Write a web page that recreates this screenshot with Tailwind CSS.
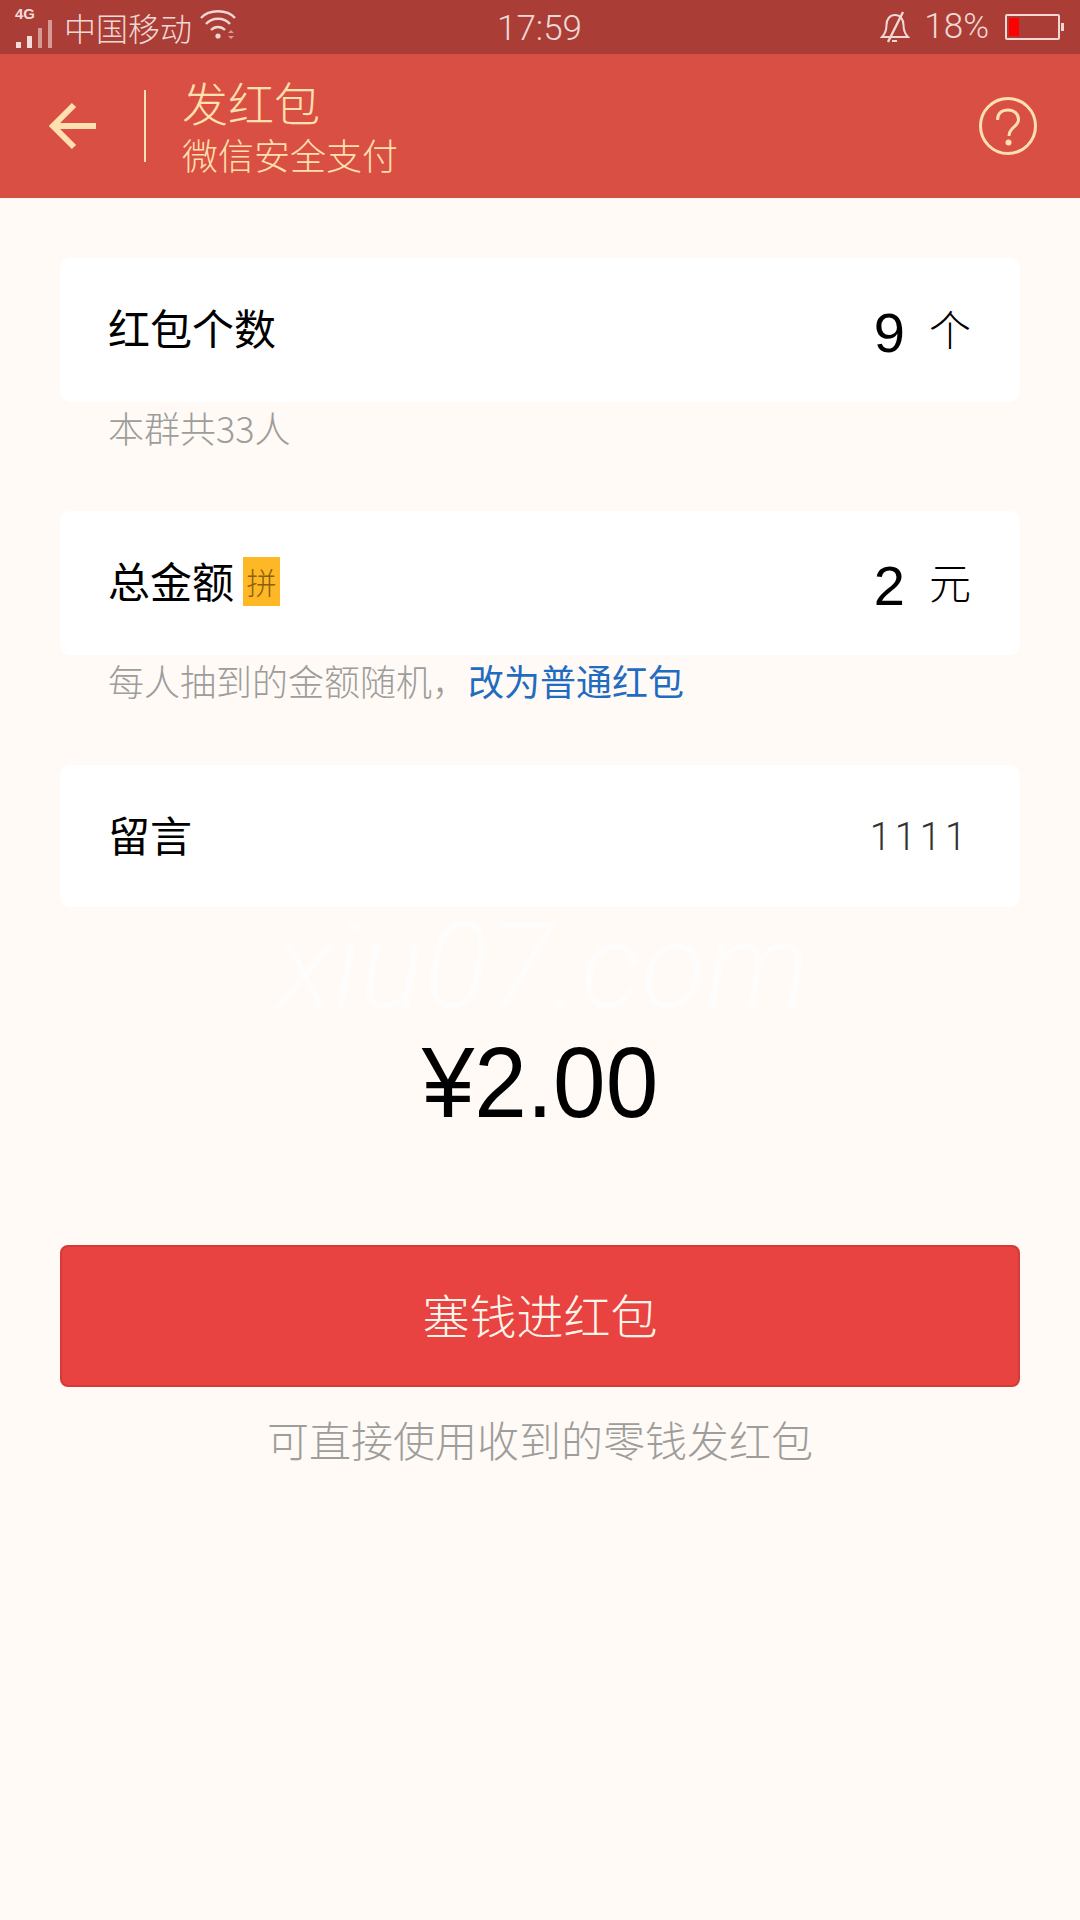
<!DOCTYPE html>
<html lang="zh-CN">
<head>
    <meta charset="UTF-8">
    <title>发红包</title>
    <script src="https://cdn.jsdelivr.net/npm/@tailwindcss/browser@4"></script>
</head>
<body class="bg-[#fffaf6] font-['Liberation_Sans','Noto_Sans_CJK_SC',sans-serif]">
<div class="relative w-[1080px] h-[1920px] overflow-hidden">
    <!-- status bar -->
    <div class="relative flex items-center justify-between h-[54px] bg-[#aa3d36] text-[#f0d8d5] pl-[15px] pr-[16px]">
        <div class="flex items-center">
            <div class="relative w-[40px] h-[42px]">
                <span class="absolute left-0 top-[1px] text-[15px] leading-[14px] font-bold text-[#f3dcd9]">4G</span>
                <div class="absolute left-[1px] bottom-0 flex items-end gap-[6px]">
                    <div class="w-[5px] h-[6px] bg-[#f3dcd9]"></div>
                    <div class="w-[5px] h-[12px] bg-[#f3dcd9]"></div>
                    <div class="w-[4px] h-[20px] bg-[#d49a95]"></div>
                    <div class="w-[4px] h-[28px] bg-[#d49a95]"></div>
                </div>
            </div>
            <span class="ml-[9px] text-[32px] leading-[54px] font-['Noto_Sans_CJK_SC'] font-light">中国移动</span>
            <svg class="ml-[8px] mt-[-4px]" width="38" height="34" viewBox="0 0 38 34" fill="none" stroke="#f0d8d5" stroke-width="2.4">
                <path d="M1 10 C9 1 27 1 35 10"/>
                <path d="M6 16 C12 9 24 9 30 16"/>
                <path d="M11 22 C15 18 21 18 25 22"/>
                <circle cx="18" cy="28" r="2.6" fill="#f0d8d5" stroke="none"/>
                <path d="M28 25 l3 -3 l3 3z M28 28 l3 3 l3 -3z" fill="#d49a95" stroke="none"/>
            </svg>
        </div>
        <span class="absolute left-[497px] top-0 text-[35px] leading-[58px] font-['Roboto'] font-light">17:59</span>
        <div class="flex items-center">
            <svg width="30" height="32" viewBox="0 0 30 32" fill="none" stroke="#f0d8d5" stroke-width="2">
                <path d="M2 26 C6 22 6.500 18 6.500 14 C6.500 8 10 4 15 4 C20 4 23.500 8 23.500 14 C23.500 18 24 22 28 26 Z"/>
                <path d="M8 31 L23 1" stroke-width="2.4"/>
                <path d="M12 30 h5"/>
            </svg>
            <span class="ml-[14px] text-[35px] leading-[54px] font-['Roboto'] font-light">18%</span>
            <div class="ml-[16px] w-[55px] h-[26px] border-2 border-[#f0d8d5] rounded-[2px] p-[2px]">
                <div class="w-[10px] h-full bg-[#ff0000]"></div>
            </div>
            <div class="ml-[1px] w-[3px] h-[8px] bg-[#f0d8d5]"></div>
        </div>
    </div>

    <!-- header -->
    <div class="flex items-center h-[144px] bg-[#d94f44] text-[#ffe0ae]">
        <svg class="ml-[48px]" width="48" height="48" viewBox="0 0 48 48" fill="none" stroke="#ffe0ae" stroke-width="6">
            <path d="M26 3 L5 24 L26 45"/>
            <path d="M5 24 H48"/>
        </svg>
        <div class="ml-[48px] w-[2px] h-[72px] bg-[#ffe0ae]"></div>
        <div class="ml-[36px] flex flex-col font-['Noto_Sans_CJK_SC'] font-light">
            <span class="text-[46px] leading-[56px]">发红包</span>
            <span class="text-[36px] leading-[50px]">微信安全支付</span>
        </div>
        <svg class="ml-auto mr-[43px]" width="58" height="58" viewBox="0 0 58 58" fill="none" stroke="#ffe0ae" stroke-width="3">
            <circle cx="29" cy="29" r="27.500"/>
            <path d="M18.500 23 C18.500 16 23 13 29 13 C35 13 39.500 17 39.500 22.500 C39.500 30 30 30 30 39" stroke-width="3"/>
            <circle cx="29.500" cy="45.500" r="3" fill="#ffe0ae" stroke="none"/>
        </svg>
    </div>

    <!-- form -->
    <div class="px-[60px] pt-[60px] font-['Noto_Sans_CJK_SC']">
        <div class="flex items-center justify-between h-[144px] bg-white rounded-[10px] pl-[48px] pr-[49px]">
            <span class="text-[42px] leading-[56px] pb-[6px] text-black">红包个数</span>
            <div class="flex items-center">
                <span class="text-[56px] leading-[64px] pt-[6px] font-['Liberation_Sans'] text-black">9</span>
                <span class="ml-[24px] text-[42px] leading-[56px] pb-[4px] text-black font-light">个</span>
            </div>
        </div>
        <p class="pl-[48px] h-[109px] pt-[2px] text-[36px] leading-[46px] text-[#9d9d9b] font-light">本群共33人</p>

        <div class="flex items-center justify-between h-[144px] bg-white rounded-[10px] pl-[48px] pr-[49px]">
            <div class="flex items-center">
                <span class="text-[42px] leading-[56px] pb-[6px] text-black">总金额</span>
                <span class="ml-[9px] mb-[3px] w-[37px] h-[49px] bg-[#ffb825] text-[#8a5f10] text-[30px] leading-[49px] text-center font-light">拼</span>
            </div>
            <div class="flex items-center">
                <span class="text-[56px] leading-[64px] pt-[6px] font-['Liberation_Sans'] text-black">2</span>
                <span class="ml-[24px] text-[42px] leading-[56px] pb-[4px] text-black font-light">元</span>
            </div>
        </div>
        <p class="pl-[48px] h-[110px] pt-[2px] text-[36px] leading-[46px] text-[#9d9d9b] font-light">每人抽到的金额随机，<span class="text-[#1f6cc0] font-normal">改为普通红包</span></p>

        <div class="flex items-center justify-between h-[142px] bg-white rounded-[10px] pl-[48px] pr-[50px]">
            <span class="text-[42px] leading-[56px] pb-[4px] text-black">留言</span>
            <span class="text-[38px] leading-[50px] pt-[2px] tracking-[4px] font-['Roboto'] font-light text-[#333333]">1111</span>
        </div>

        <div class="relative h-[338px] text-center">
            <span class="absolute left-[6px] right-0 top-[0px] text-[120px] leading-[120px] italic font-['Roboto'] font-light text-white/50">xiu07.com</span>
            <span class="absolute left-0 right-0 top-[118px] text-[100px] leading-[114px] scale-x-[0.945] font-['Liberation_Sans'] text-black">¥2.00</span>
        </div>

        <div class="h-[142px] flex items-center justify-center pb-[4px] bg-[#e84340] border-2 border-[#d33a38] rounded-[8px] text-[47px] text-[#fff4ea] font-light">塞钱进红包</div>
        <p class="mt-[25px] text-center text-[42px] leading-[54px] text-[#9d9d9b] font-light">可直接使用收到的零钱发红包</p>
    </div>
</div>
</body>
</html>
